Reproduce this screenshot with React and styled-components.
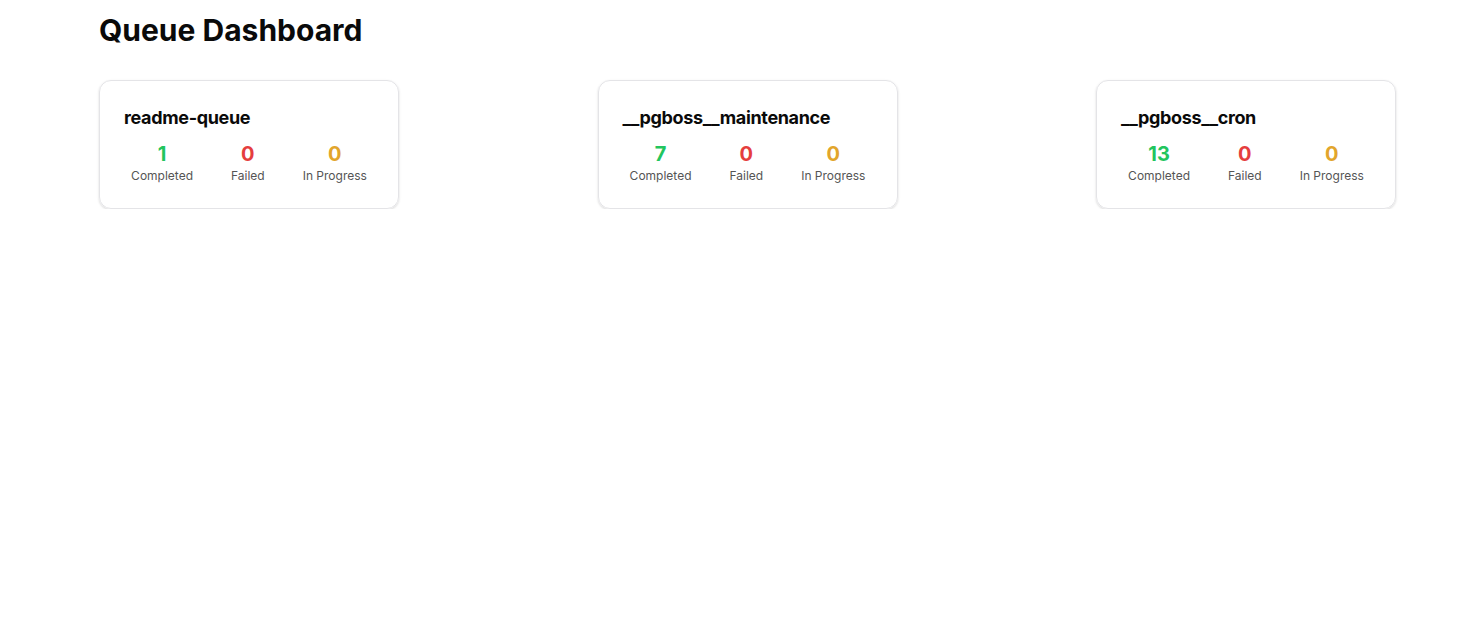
import styled, { createGlobalStyle } from "styled-components";

const queues = [
  { name: "readme-queue", completed: 1, failed: 0, active: 0 },
  { name: "__pgboss__maintenance", completed: 7, failed: 0, active: 0 },
  { name: "__pgboss__cron", completed: 13, failed: 0, active: 0 },
];

const App = () => {
  return (
    <>
      <GlobalStyle />
      <Page>
        <Title>Queue Dashboard</Title>
        <CardRow>
          {queues.map(q => (
            <Card key={q.name}>
              <QueueName>{q.name}</QueueName>
              <Stats>
                <Stat>
                  <Count color="#22c55e">{q.completed}</Count>
                  <Label>Completed</Label>
                </Stat>
                <Stat>
                  <Count color="#e53e3e">{q.failed}</Count>
                  <Label>Failed</Label>
                </Stat>
                <Stat>
                  <Count color="#e2a52c">{q.active}</Count>
                  <Label>In Progress</Label>
                </Stat>
              </Stats>
            </Card>
          ))}
        </CardRow>
      </Page>
    </>
  )
}

const GlobalStyle = createGlobalStyle`
body {
  margin: 0;
  background: #fff;
  font-family: Inter, "Noto Sans", sans-serif;
  color: #0a0a0a;
}
`
const Page = styled.div`
padding: 12px 0 0 99px;
width: 1297px;
`
const Title = styled.h1`
margin: 0 0 32px;
font-size: 30px;
line-height: 36px;
font-weight: 700;
`
const CardRow = styled.div`
display: flex;
justify-content: space-between;
`
const Card = styled.div`
width: 300px;
box-sizing: border-box;
padding: 23px 24px 24px;
border: 1px solid #e4e4e7;
border-radius: 12px;
box-shadow: 0 1px 3px rgba(0, 0, 0, 0.1), 0 1px 2px rgba(0, 0, 0, 0.06);
`
const QueueName = styled.div`
font-size: 18px;
line-height: 28px;
font-weight: 700;
letter-spacing: -0.35px;
margin-bottom: 8px;
`
const Stats = styled.div`
display: flex;
justify-content: center;
gap: 38px;
`
const Stat = styled.div`
display: flex;
flex-direction: column;
align-items: center;
white-space: nowrap;
`
const Count = styled.div`
font-size: 20px;
line-height: 28px;
font-weight: 700;
color: ${props => props.color};
`
const Label = styled.div`
font-size: 12px;
line-height: 16px;
color: #555;
`
export default App;
